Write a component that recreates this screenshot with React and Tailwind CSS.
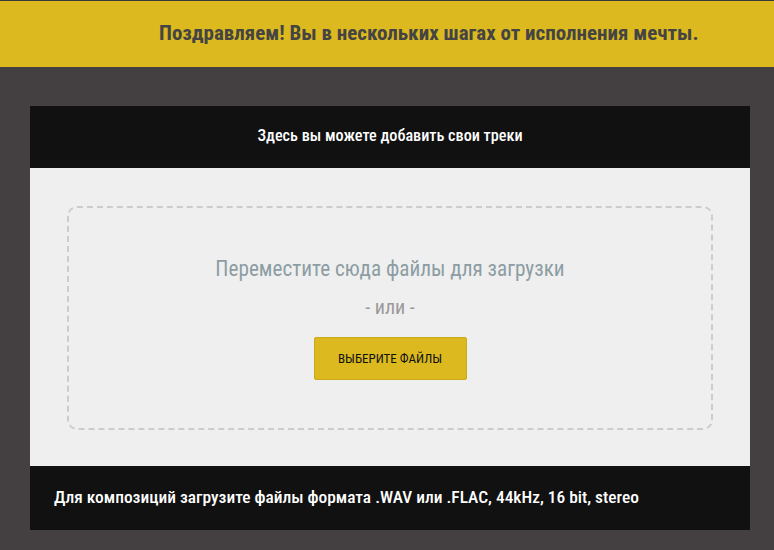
export default function App() {
  return (
    <div
      className="w-[774px] h-[550px] bg-[#443f41] border-t border-[#3a3a3a] overflow-hidden"
      style={{ fontFamily: '"Roboto Condensed", Roboto, sans-serif' }}
    >
      {/* Header banner */}
      <div className="h-[66px] bg-[#dcb91e] flex items-center pl-[159px]">
        <h1 className="text-[21px] font-bold text-[#444]">
          Поздравляем! Вы в нескольких шагах от исполнения мечты.
        </h1>
      </div>

      {/* Upload card */}
      <div className="mx-[30px] mt-[39px] w-[720px]">
        <div className="h-[62px] bg-[#111] flex items-center justify-center pb-[1px]">
          <p className="text-[16.2px] font-medium text-white">
            Здесь вы можете добавить свои треки
          </p>
        </div>

        <div className="h-[298px] bg-[#efefef] pt-[38px] px-[37px]">
          <div className="h-[224px] border-2 border-dashed border-[#cccccc] rounded-[10px] flex flex-col items-center pt-[47px]">
            <p className="text-[21.2px] text-[#8c9da3] leading-[28px]">
              Переместите сюда файлы для загрузки
            </p>
            <p className="text-[20px] text-[#999] mt-[12px] leading-[24px]">- или -</p>
            <button className="mt-[18px] w-[153px] h-[43px] bg-[#dcb91e] border border-[#c9a91a] rounded-[2px] text-[13px] text-[#111]">
              ВЫБЕРИТЕ ФАЙЛЫ
            </button>
          </div>
        </div>

        <div className="h-[64px] bg-[#111] flex items-center pl-[24px] pb-[1px]">
          <p className="text-[17.4px] font-medium text-white">
            Для композиций загрузите файлы формата .WAV или .FLAC, 44kHz, 16 bit, stereo
          </p>
        </div>
      </div>
    </div>
  );
}
